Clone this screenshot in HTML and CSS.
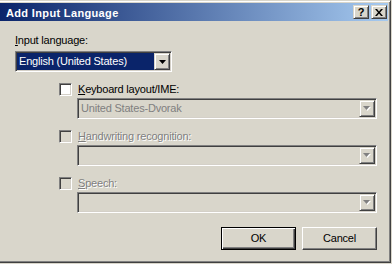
FILE: index.html
```html
<!DOCTYPE html>
<html>
<head>
<meta charset="utf-8">
<link rel="stylesheet" href="styles.css">
</head>
<body>
<div class="window">
  <div class="titlebar">
    <span class="title">Add Input Language</span>
    <div class="caption-buttons">
      <span class="cbtn help">?</span>
      <span class="cbtn close"><svg width="8" height="7" viewBox="0 0 8 7"><path d="M0 0h2l2 2.4 2-2.4h2l-3 3.5 3 3.5h-2l-2-2.4-2 2.4h-2l3-3.5z" fill="#000"/></svg></span>
    </div>
  </div>
  <div class="client">
    <div class="field-label"><u>I</u>nput language:</div>
    <div class="combo combo-lang">
      <div class="combo-text selected">English (United States)</div>
      <div class="drop"><svg width="7" height="4" viewBox="0 0 7 4"><path d="M0 0h7l-3.5 4z" fill="#000"/></svg></div>
    </div>

    <div class="option">
      <div class="check-row">
        <span class="checkbox"></span>
        <span class="check-label"><u>K</u>eyboard layout/IME:</span>
      </div>
      <div class="combo combo-wide disabled">
        <div class="combo-text">United States-Dvorak</div>
        <div class="drop"><svg width="8" height="5" viewBox="0 0 8 5"><path d="M1 1h7l-3.5 4z" fill="#fff"/><path d="M0 0h7l-3.5 4z" fill="#808080"/></svg></div>
      </div>
    </div>

    <div class="option">
      <div class="check-row">
        <span class="checkbox disabled"></span>
        <span class="check-label disabled"><u>H</u>andwriting recognition:</span>
      </div>
      <div class="combo combo-wide disabled">
        <div class="combo-text"></div>
        <div class="drop"><svg width="8" height="5" viewBox="0 0 8 5"><path d="M1 1h7l-3.5 4z" fill="#fff"/><path d="M0 0h7l-3.5 4z" fill="#808080"/></svg></div>
      </div>
    </div>

    <div class="option">
      <div class="check-row">
        <span class="checkbox disabled"></span>
        <span class="check-label disabled"><u>S</u>peech:</span>
      </div>
      <div class="combo combo-wide disabled">
        <div class="combo-text"></div>
        <div class="drop"><svg width="8" height="5" viewBox="0 0 8 5"><path d="M1 1h7l-3.5 4z" fill="#fff"/><path d="M0 0h7l-3.5 4z" fill="#808080"/></svg></div>
      </div>
    </div>

    <div class="buttons">
      <button class="btn default">OK</button>
      <button class="btn">Cancel</button>
    </div>
  </div>
</div>
</body>
</html>
```
FILE: styles.css
```css
* { box-sizing: border-box; }
html, body { margin: 0; padding: 0; }
body {
  width: 392px;
  height: 264px;
  overflow: hidden;
  background: #d9d6cb;
  font-family: "Liberation Sans", Arial, sans-serif;
  font-size: 11px;
  line-height: 13px;
  letter-spacing: -0.2px;
  color: #000;
}
.window {
  width: 394px;
  height: 263px;
  margin-left: -3px;
  border: 1px solid;
  border-color: #d9d6cb #404040 #404040 #d9d6cb;
  box-shadow: inset 1px 1px 0 #fff, inset -1px -1px 0 #808080;
  padding: 2px;
  overflow: hidden;
}
.titlebar {
  height: 18px;
  display: flex;
  align-items: center;
  justify-content: space-between;
  padding: 0 1px 0 6px;
  background: linear-gradient(to right, #0a246a, #a6caf0);
}
.title {
  color: #fff;
  font-weight: bold;
  letter-spacing: 0.35px;
  line-height: 18px;
  padding-top: 1px;
}
.caption-buttons {
  display: flex;
  gap: 2px;
}
.cbtn {
  width: 16px;
  height: 14px;
  display: flex;
  align-items: center;
  justify-content: center;
  background: #d9d6cb;
  border: 1px solid;
  border-color: #d9d6cb #404040 #404040 #d9d6cb;
  box-shadow: inset 1px 1px 0 #fff, inset -1px -1px 0 #808080;
  font-weight: bold;
  font-size: 11px;
  line-height: 12px;
  letter-spacing: 0;
}
.client {
  padding: 13px 11px 0 15px;
}
.field-label {
  height: 13px;
}
.combo {
  height: 21px;
  display: flex;
  padding: 1px;
  background: #fff;
  border: 1px solid;
  border-color: #808080 #fff #fff #808080;
  box-shadow: inset 1px 1px 0 #404040, inset -1px -1px 0 #d4d0c8;
}
.combo.disabled {
  background: #d9d6cb;
}
.combo-lang {
  width: 157px;
  margin-top: 4px;
}
.combo-text {
  flex: 1;
  padding-left: 2px;
  line-height: 17px;
  white-space: nowrap;
  overflow: hidden;
}
.combo-text.selected {
  background: #0a246a;
  color: #fff;
}
.combo.disabled .combo-text {
  color: #808080;
}
.drop {
  width: 16px;
  height: 17px;
  display: flex;
  align-items: center;
  justify-content: center;
  background: #d9d6cb;
  border: 1px solid;
  border-color: #d9d6cb #404040 #404040 #d9d6cb;
  box-shadow: inset 1px 1px 0 #fff, inset -1px -1px 0 #808080;
}
.option {
  margin-top: 11px;
  padding-left: 44px;
}
.check-row {
  display: flex;
  align-items: center;
  height: 13px;
}
.checkbox {
  width: 13px;
  height: 13px;
  flex: none;
  background: #fff;
  border: 1px solid;
  border-color: #808080 #fff #fff #808080;
  box-shadow: inset 1px 1px 0 #404040, inset -1px -1px 0 #d4d0c8;
}
.checkbox.disabled {
  background: #d9d6cb;
}
.check-label {
  margin-left: 6px;
  white-space: nowrap;
}
.check-label.disabled {
  color: #808080;
  text-shadow: 1px 1px 0 #fff;
}
.combo-wide {
  width: 300px;
  margin-top: 2px;
  margin-left: 18px;
}
.buttons {
  display: flex;
  justify-content: flex-end;
  gap: 6px;
  margin-top: 14px;
}
.btn {
  width: 75px;
  height: 23px;
  padding: 0;
  font: inherit;
  letter-spacing: inherit;
  color: #000;
  background: #d9d6cb;
  border: 1px solid;
  border-color: #fff #404040 #404040 #fff;
  box-shadow: inset -1px -1px 0 #808080;
}
.btn.default {
  border-color: #000;
  box-shadow: inset 1px 1px 0 #fff, inset -1px -1px 0 #404040, inset -2px -2px 0 #808080;
}
```
